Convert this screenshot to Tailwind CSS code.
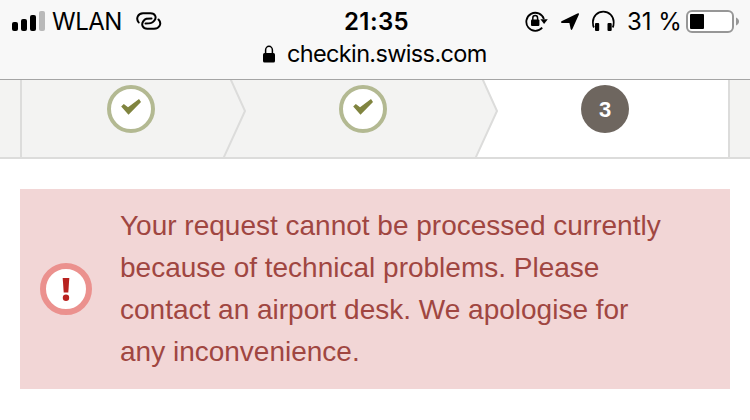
<!DOCTYPE html>
<html lang="en">
<head>
  <meta charset="UTF-8" />
  <meta name="viewport" content="width=device-width, initial-scale=1.0" />
  <title>SWISS Check-in</title>
  <script src="https://cdn.jsdelivr.net/npm/@tailwindcss/browser@4"></script>
</head>
<body class="bg-white w-[750px] h-[420px] overflow-hidden font-['Liberation_Sans',Arial,sans-serif]">
  <!-- Browser header -->
  <header class="h-20 bg-[#f8f8f8] border-b border-[#a5a5a5] text-black font-[Inter,sans-serif]">
    <!-- Status bar -->
    <div class="h-10 grid grid-cols-[344px_65px_1fr] items-center">
      <div class="flex items-center pl-3">
        <svg class="w-[33px] h-5" viewBox="0 0 33 20">
          <rect x="0" y="11" width="6" height="9" rx="2" />
          <rect x="9" y="8" width="6" height="12" rx="2" />
          <rect x="18" y="4" width="6" height="16" rx="2" />
          <rect x="27" y="0" width="6" height="20" rx="2" fill="#b9b9b9" />
        </svg>
        <span class="ml-[7px] w-[84px] pt-0.5 text-2xl leading-10 tracking-[-0.5px] whitespace-nowrap">WLAN</span>
        <svg class="w-[26px] h-5" viewBox="0 0 26 20" fill="none" stroke="#000" stroke-width="2" stroke-linecap="round">
          <path d="M2.700 11.500C-.5 7.500 2 2.300 7 2.300h7.500c5 0 6.300 4.200 3.800 7.300-2.300 2.900-4.300 2.900-8.800 2.900" />
          <path d="M15.500 7.400c-4.500 0-6.300.1-8.300 3-2.200 3.200-.5 7.300 4 7.300H18c5.500 0 8.200-5.200 4.500-9.200" />
        </svg>
      </div>
      <span class="pt-0.5 text-2xl leading-10 font-semibold tracking-[0.4px] whitespace-nowrap">21:35</span>
      <div class="flex items-center pl-[116px]">
        <!-- Rotation lock -->
        <svg class="w-[23px] h-[22px] shrink-0" viewBox="0 0 23 22">
          <path d="M17.200 17.600A9 9 0 1 1 18.900 9" fill="none" stroke="#000" stroke-width="1.800" />
          <path d="M15.400 9.300h7.400l-3.700 4.600z" />
          <rect x="6" y="9.600" width="8.400" height="6.400" rx="1" />
          <path d="M7.800 10V8a2.400 2.400 0 0 1 4.800 0v2" fill="none" stroke="#000" stroke-width="1.500" />
        </svg>
        <!-- Location -->
        <svg class="w-5 h-5 ml-3 shrink-0" viewBox="0 0 20 20">
          <path d="M2 10 17.400 2.400q2.200-.8 1.400 1.400L12.400 18q-1.200 2-1.800-.2L9.400 12 2.200 12q-2.400-.6-.2-2z" />
        </svg>
        <!-- Headphones -->
        <svg class="w-[23px] h-[22px] ml-3 shrink-0" viewBox="0 0 23 22">
          <path d="M1.900 17.500C.8 15.500.9 14 .9 12a10.400 10.400 0 0 1 20.800 0c0 2 .1 3.500-1 5.500" fill="none" stroke="#000" stroke-width="1.700" />
          <rect x="3" y="13" width="4.200" height="8" rx="1" />
          <rect x="15.500" y="13" width="4.200" height="8" rx="1" />
        </svg>
        <span class="ml-3 w-[59px] shrink-0 pt-0.5 text-2xl leading-10 whitespace-nowrap">31 %</span>
        <svg class="w-[54px] h-6 shrink-0" viewBox="0 0 54 24">
          <rect x="1" y="2" width="46" height="21" rx="5" fill="#fff" stroke="#979797" stroke-width="2" />
          <rect x="4" y="5" width="14" height="15" rx="1" />
          <path d="M50 8.500c4 1.500 4 6.500 0 8z" fill="#979797" />
        </svg>
      </div>
    </div>
    <!-- Address -->
    <div class="flex items-center h-7 pl-[263px]">
      <svg class="w-3 h-[18px]" viewBox="0 0 12 18">
        <rect x="0" y="8" width="12" height="9.500" rx="1.500" />
        <path d="M2.600 9V5a3.400 3.700 0 0 1 6.800 0v4" fill="none" stroke="#000" stroke-width="1.500" />
      </svg>
      <span class="ml-3 text-[23.5px] leading-7 tracking-[-0.65px] whitespace-nowrap">checkin.swiss.com</span>
    </div>
  </header>

  <!-- Progress steps -->
  <nav class="flex h-[79px] px-5 bg-[#f3f3f2] border-b-2 border-[#dcdcdb]">
    <div class="flex w-full border-x-2 border-[#dcdcdb]">
      <div class="w-[201px] pl-[85px] pt-[5px]">
        <svg class="size-12" viewBox="0 0 48 48">
          <circle cx="24" cy="24" r="22" fill="#fff" stroke="#b3b992" stroke-width="4" />
          <path d="M14.200 21.500l2.600-2.600 4.200 3.400L32 14l2 3L21.500 29.800z" fill="#80843f" />
        </svg>
      </div>
      <svg class="w-[23px] h-[77px]" viewBox="0 0 23 77" fill="none" stroke="#dcdcdb" stroke-width="2">
        <path d="M7.500 -1 22 31 .5 78" />
      </svg>
      <div class="w-[229px] pl-[93px] pt-[5px]">
        <svg class="size-12" viewBox="0 0 48 48">
          <circle cx="24" cy="24" r="22" fill="#fff" stroke="#b3b992" stroke-width="4" />
          <path d="M14.200 21.500l2.600-2.600 4.200 3.400L32 14l2 3L21.500 29.800z" fill="#80843f" />
        </svg>
      </div>
      <svg class="w-[23px] h-[77px]" viewBox="0 0 23 77" stroke="#dcdcdb" stroke-width="2">
        <path d="M7.500 -1 22 31 .5 78H24V-1z" fill="#fff" stroke="none" />
        <path d="M7.500 -1 22 31 .5 78" fill="none" />
      </svg>
      <div class="flex-1 bg-white pl-[83px] pt-[5px]">
        <div class="size-12 rounded-full bg-[#6e665f] text-white text-[22px] font-bold leading-[49px] text-center">3</div>
      </div>
    </div>
  </nav>

  <!-- Error message -->
  <main class="px-5 pt-[30px]">
    <div class="flex items-center h-[200px] bg-[#f2d6d6] pl-5">
      <svg class="size-[52px] shrink-0" viewBox="0 0 52 52">
        <circle cx="26" cy="26" r="23" fill="#fff" stroke="#eb918e" stroke-width="6" />
        <path d="M22.700 15h6.600l-1 14.500h-4.600z" fill="#b8221f" />
        <circle cx="26" cy="34.800" r="3.200" fill="#b8221f" />
      </svg>
      <p class="ml-7 text-[28px] leading-[42px] text-[#a04641] whitespace-nowrap">
        Your request cannot be processed currently<br />
        because of technical problems. Please<br />
        contact an airport desk. We apologise for<br />
        any inconvenience.
      </p>
    </div>
  </main>
</body>
</html>
